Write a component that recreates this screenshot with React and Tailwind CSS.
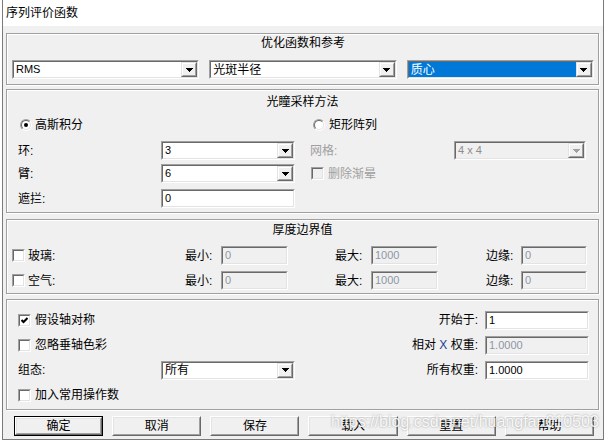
import React from "react";

const F = "font-['Liberation_Sans','Noto_Sans_CJK_SC',sans-serif]";

// classic 3D sunken frame (edit boxes, combos, checkboxes)
function Sunken({ className = "", inner = "", children }) {
  return (
    <div
      className={`border border-t-[#a0a0a0] border-l-[#a0a0a0] border-r-white border-b-white ${className}`}
    >
      <div
        className={`flex h-full border border-t-[#696969] border-l-[#696969] border-r-[#e3e3e3] border-b-[#e3e3e3] ${inner}`}
      >
        {children}
      </div>
    </div>
  );
}

function DropBtn({ disabled }) {
  return (
    <div className="w-[16px] h-full border border-t-[#e3e3e3] border-l-[#e3e3e3] border-r-[#696969] border-b-[#696969]">
      <div className="h-full flex items-center justify-center border border-t-white border-l-white border-r-[#a0a0a0] border-b-[#a0a0a0] bg-[#f0f0f0]">
        <svg width="7" height="4" viewBox="0 0 7 4" shapeRendering="crispEdges">
          <path
            d="M0 0H7V1H6V2H5V3H4V4H3V3H2V2H1V1H0Z"
            fill={disabled ? "#a0a0a0" : "#000"}
          />
        </svg>
      </div>
    </div>
  );
}

function Combo({ value, selected, disabled, latin, className = "" }) {
  return (
    <Sunken
      className={`h-[19px] ${className}`}
      inner={disabled ? "bg-[#f0f0f0]" : "bg-white"}
    >
      <div
        className={`flex-1 flex items-center pl-[2px] ${
          selected
            ? "bg-[#0078d7] text-white"
            : disabled
            ? "text-[#8d8d8d]"
            : "text-black"
        }`}
      >
        <span className={`leading-none ${latin ? "text-[11px]" : "text-[12px]"}`}>
          {value}
        </span>
      </div>
      <DropBtn disabled={disabled} />
    </Sunken>
  );
}

function Field({ value, disabled, className = "" }) {
  return (
    <Sunken
      className={`h-[19px] ${className}`}
      inner={disabled ? "bg-[#f0f0f0]" : "bg-white"}
    >
      <div
        className={`flex-1 flex items-center pl-[2px] text-[11px] leading-none ${
          disabled ? "text-[#8d97a6]" : "text-black"
        }`}
      >
        {value}
      </div>
    </Sunken>
  );
}

function Check({ checked, disabled }) {
  return (
    <Sunken
      className="w-[13px] h-[13px] shrink-0"
      inner={`items-center justify-center ${disabled ? "bg-[#f0f0f0]" : "bg-white"}`}
    >
      {checked && (
        <svg width="7" height="7" viewBox="0 0 7 7">
          <polyline
            points="0.5,3 2.5,5 6.5,1"
            fill="none"
            stroke="#000"
            strokeWidth="2"
          />
        </svg>
      )}
    </Sunken>
  );
}

function Radio({ checked }) {
  return (
    <div className="w-[12px] h-[12px] shrink-0 rounded-full border border-t-[#a0a0a0] border-l-[#a0a0a0] border-r-white border-b-white">
      <div className="w-full h-full rounded-full border border-t-[#696969] border-l-[#696969] border-r-[#e3e3e3] border-b-[#e3e3e3] bg-white flex items-center justify-center">
        {checked && <div className="w-[4px] h-[4px] rounded-full bg-black" />}
      </div>
    </div>
  );
}

function Btn({ label, def }) {
  const body = (
    <div className="h-full border border-t-white border-l-white border-r-[#696969] border-b-[#696969]">
      <div className="h-full flex items-center justify-center border border-t-[#e3e3e3] border-l-[#e3e3e3] border-r-[#a0a0a0] border-b-[#a0a0a0] leading-none">
        {label}
      </div>
    </div>
  );
  return def ? <div className="h-full border border-black">{body}</div> : body;
}

function Group({ className = "", children }) {
  return (
    <div
      className={`border border-[#a0a0a0] shadow-[inset_1px_1px_0_#fff,1px_1px_0_#fff] ${className}`}
    >
      {children}
    </div>
  );
}

function Label({ children, className = "" }) {
  return <span className={`leading-none ${className}`}>{children}</span>;
}

const buttons = ["确定", "取消", "保存", "载入", "重置", "帮助"];

export default function App() {
  return (
    <div
      className={`relative w-[606px] h-[443px] bg-white overflow-hidden text-[12px] text-black ${F}`}
    >
      <div className="ml-[2px] w-[602px] h-[440px] border-l border-r border-b border-[#7a7a7a] flex flex-col">
        {/* title bar */}
        <div className="h-[26px] shrink-0 bg-white flex items-center pl-[3px]">
          <span className="leading-none text-[12px]">序列评价函数</span>
        </div>

        <div className="flex-1 bg-[#f0f0f0] pt-[7px] pl-[3px] pr-[4px] flex flex-col">
          {/* 优化函数和参考 */}
          <Group className="h-[52px] shrink-0 pl-[5px] pr-[4px]">
            <div className="h-[18px] flex items-center justify-center">
              <Label>优化函数和参考</Label>
            </div>
            <div className="mt-[8px] grid grid-cols-3 gap-[10px]">
              <Combo value="RMS" latin />
              <Combo value="光斑半径" />
              <Combo value="质心" selected />
            </div>
          </Group>

          {/* 光瞳采样方法 */}
          <Group className="mt-[4px] h-[124px] shrink-0 pl-[11px]">
            <div className="mt-[3px] h-[18px] flex items-center justify-center -ml-[11px]">
              <Label>光瞳采样方法</Label>
            </div>
            <div className="mt-[5px] h-[18px] flex items-center">
              <div className="w-[277px] flex items-center pl-[2px] gap-[3px]">
                <Radio checked />
                <Label>高斯积分</Label>
              </div>
              <div className="ml-[15px] w-[276px] flex items-center pl-[3px] gap-[4px]">
                <Radio />
                <Label>矩形阵列</Label>
              </div>
            </div>
            <div className="mt-[7px] h-[19px] flex items-center">
              <div className="w-[277px] flex items-center justify-between">
                <Label>环:</Label>
                <Combo value="3" latin className="w-[134px]" />
              </div>
              <div className="ml-[15px] w-[276px] flex items-center justify-between">
                <Label className="text-[#a0a0a0]">网格:</Label>
                <Combo value="4 x 4" latin disabled className="w-[132px]" />
              </div>
            </div>
            <div className="mt-[4px] h-[19px] flex items-center">
              <div className="w-[277px] flex items-center justify-between">
                <Label>臂:</Label>
                <Combo value="6" latin className="w-[134px]" />
              </div>
              <div className="ml-[16px] flex items-center gap-[4px]">
                <Check disabled />
                <Label className="text-[#a0a0a0]">删除渐晕</Label>
              </div>
            </div>
            <div className="mt-[6px] h-[19px] flex items-center">
              <div className="w-[277px] flex items-center justify-between">
                <Label>遮拦:</Label>
                <Field value="0" className="w-[134px]" />
              </div>
            </div>
          </Group>

          {/* 厚度边界值 */}
          <Group className="mt-[6px] h-[75px] shrink-0 pl-[5px]">
            <div className="mt-[1px] h-[18px] flex items-center justify-center -ml-[5px]">
              <Label>厚度边界值</Label>
            </div>
            {[
              ["玻璃:", "mt-[7px]"],
              ["空气:", "mt-[6px]"],
            ].map(([name, mt]) => (
              <div key={name} className={`${mt} h-[19px] flex items-center`}>
                <div className="w-[173px] flex items-center gap-[3px]">
                  <Check />
                  <Label>{name}</Label>
                </div>
                <Label className="w-[36px]">最小:</Label>
                <Field value="0" disabled className="w-[67px]" />
                <div className="w-[47px]" />
                <Label className="w-[36px]">最大:</Label>
                <Field value="1000" disabled className="w-[67px]" />
                <div className="w-[48px]" />
                <Label className="w-[35px]">边缘:</Label>
                <Field value="0" disabled className="w-[66px]" />
              </div>
            ))}
          </Group>

          {/* options */}
          <Group className="mt-[5px] h-[111px] shrink-0 pl-[11px] pr-[9px] pt-[10px] flex flex-col gap-[5px]">
            <div className="h-[20px] flex items-center">
              <div className="w-[277px] flex items-center gap-[4px]">
                <Check checked />
                <Label>假设轴对称</Label>
              </div>
              <div className="flex-1 flex items-center justify-end gap-[7px]">
                <Label>开始于:</Label>
                <Field value="1" className="w-[104px]" />
              </div>
            </div>
            <div className="h-[20px] flex items-center">
              <div className="w-[277px] flex items-center gap-[4px]">
                <Check />
                <Label>忽略垂轴色彩</Label>
              </div>
              <div className="flex-1 flex items-center justify-end gap-[7px]">
                <Label>
                  相对 <span className="text-[#23408e]">X</span> 权重:
                </Label>
                <Field value="1.0000" disabled className="w-[104px]" />
              </div>
            </div>
            <div className="h-[20px] flex items-center">
              <div className="w-[277px] flex items-center justify-between">
                <Label>组态:</Label>
                <Combo value="所有" className="w-[134px]" />
              </div>
              <div className="flex-1 flex items-center justify-end gap-[7px]">
                <Label>所有权重:</Label>
                <Field value="1.0000" className="w-[104px]" />
              </div>
            </div>
            <div className="h-[20px] flex items-center">
              <div className="w-[277px] flex items-center gap-[4px]">
                <Check />
                <Label>加入常用操作数</Label>
              </div>
            </div>
          </Group>

          {/* buttons */}
          <div className="mt-[6px] ml-[8px] w-[580px] h-[20px] grid grid-cols-6 gap-[9px]">
            {buttons.map((b, i) => (
              <Btn key={b} label={b} def={i === 0} />
            ))}
          </div>
        </div>
      </div>

      {/* watermark */}
      <div className="absolute left-[331px] top-[414px] text-[16px] leading-none text-white/90 font-['Liberation_Sans',sans-serif] [text-shadow:0_0_2px_rgba(0,0,0,0.4)] pointer-events-none">
        https://blog.csdn.net/huangfan010503
      </div>
    </div>
  );
}
